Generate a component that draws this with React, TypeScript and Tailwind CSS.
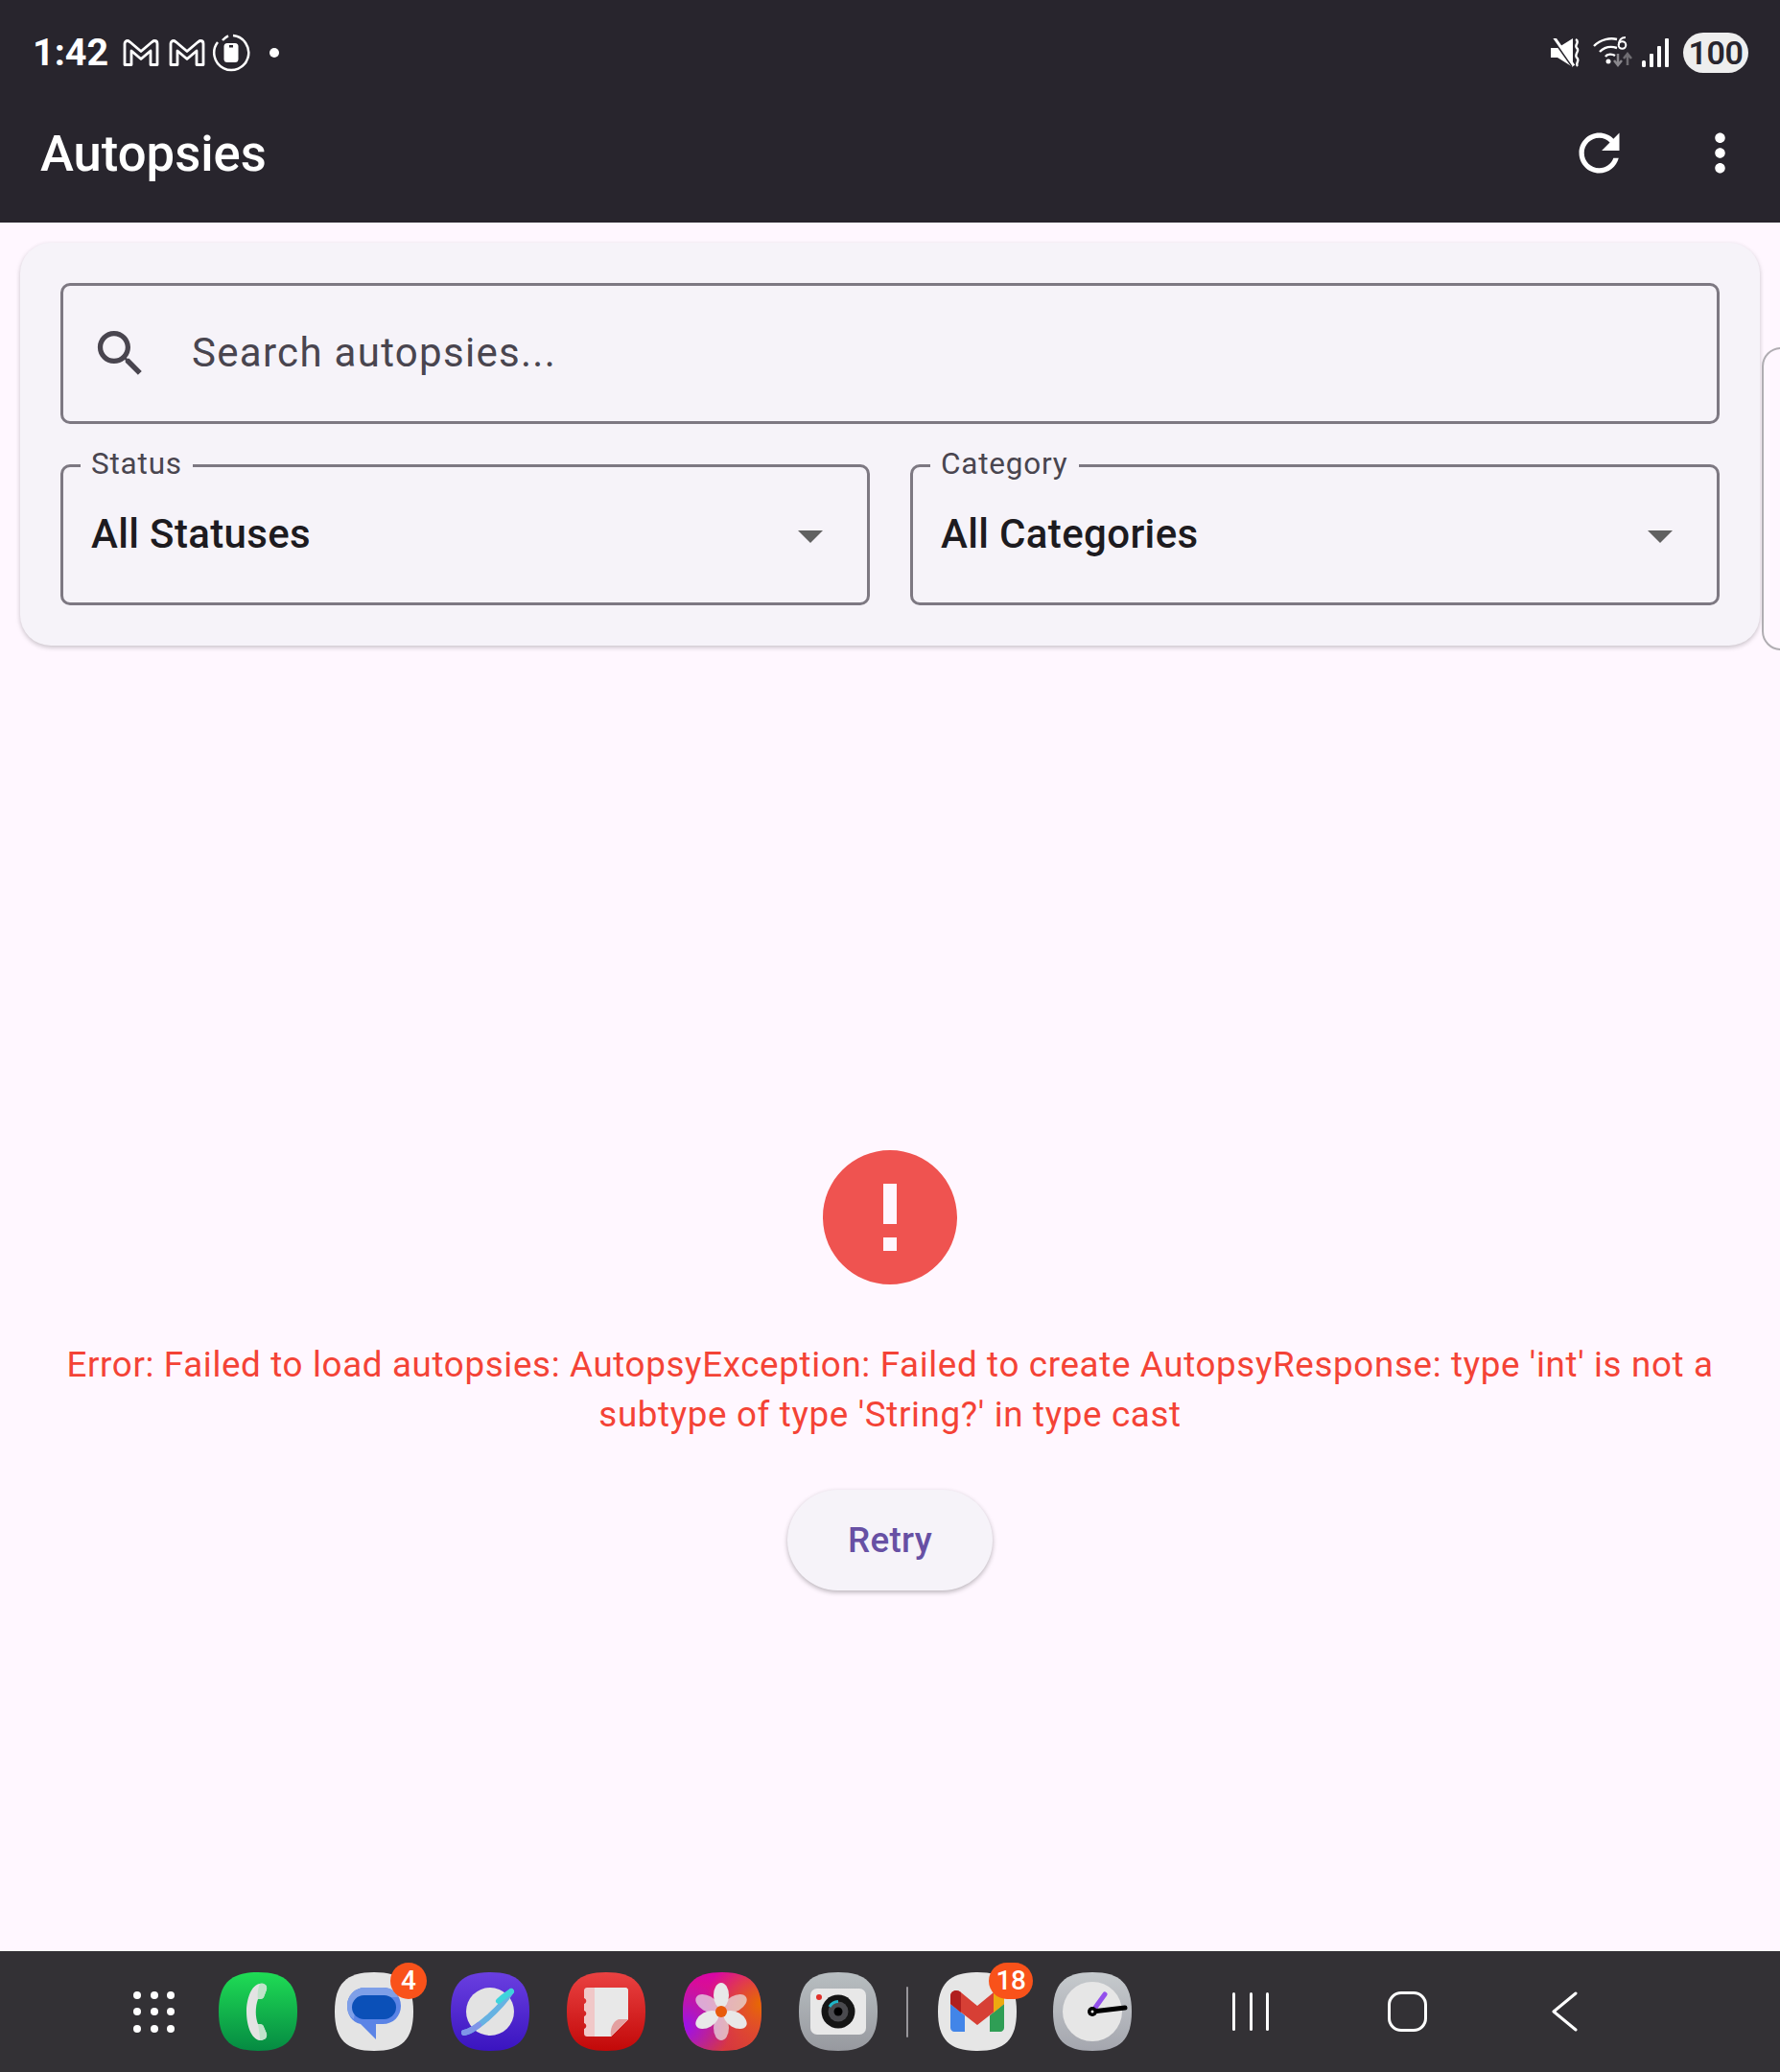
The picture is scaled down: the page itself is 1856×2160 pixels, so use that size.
const iconShape = 'M41 0C70 0 82 12 82 41S70 82 41 82 0 70 0 41 12 0 41 0Z';

function AppIcon({ id, from, to, children }: { id: string; from: string; to: string; children?: React.ReactNode }) {
  return (
    <svg width="82" height="82" viewBox="0 0 82 82" className="block">
      <defs>
        <linearGradient id={id} x1="0" y1="0" x2="0" y2="1">
          <stop offset="0" stopColor={from} />
          <stop offset="1" stopColor={to} />
        </linearGradient>
      </defs>
      <path d={iconShape} fill={`url(#${id})`} />
      {children}
    </svg>
  );
}

function Badge({ text, className }: { text: string; className: string }) {
  return (
    <span className={`absolute top-[-10px] flex h-[38px] items-center justify-center rounded-full bg-[#f9521a] text-[28px] font-medium text-white ${className}`}>
      {text}
    </span>
  );
}

function GmailGlyph() {
  return (
    <svg width="38" height="28" viewBox="0 0 38 28" className="block">
      <path d="M2 26.5V4.5C2 2.5 3.5 1.5 5 1.5C6 1.5 6.5 2 7.5 2.800L19 12.5L30.500 2.800C31.500 2 32 1.500 33 1.500C34.500 1.500 36 2.500 36 4.500V26.500H29V12L19 20.500L9 12V26.500Z" fill="none" stroke="#fff" strokeWidth="2.800" strokeLinejoin="round" />
    </svg>
  );
}

function StatusBar() {
  return (
    <div className="flex h-[110px] items-center justify-between pl-[34px] pr-[33px]">
      <div className="flex items-center">
        <span className="w-[94px] text-[39.5px] font-bold leading-none text-white">1:42</span>
        <GmailGlyph />
        <span className="ml-[10px]"><GmailGlyph /></span>
        <svg width="40" height="40" viewBox="0 0 40 40" className="ml-[7px] block">
          <path d="M22 2.100A18 18 0 1 1 6 9" fill="none" stroke="#fff" strokeWidth="2.500" />
          <path d="M11 7A18 18 0 0 1 17 2.300" fill="none" stroke="#fff" strokeWidth="2.500" />
          <rect x="12.500" y="10" width="15" height="20" rx="3.500" fill="#fff" />
          <rect x="18" y="12" width="4" height="2.500" fill="#28252d" />
        </svg>
        <span className="ml-[20px] block h-[10px] w-[10px] rounded-full bg-white" />
      </div>
      <div className="flex items-center">
        <svg width="30" height="30" viewBox="0 0 30 30" className="block">
          <path d="M0 10H7L23 0V30L7 20H0Z" fill="#fff" />
          <path d="M1 -2L23 29" stroke="#28252d" strokeWidth="3.500" />
          <path d="M3.500 -1L24 28.500" stroke="#fff" strokeWidth="3" />
          <path d="M26 1C31 4 24 7 27 10C31 13 24 16 27 20C31 23 25 26 28 29" fill="none" stroke="#fff" strokeWidth="2.400" />
        </svg>
        <svg width="42" height="34" viewBox="0 0 42 34" className="ml-[14px] block">
          <path d="M1 10C8 3 18 1 25 3" fill="none" stroke="#fff" strokeWidth="2.400" />
          <path d="M7 16C12 11 19 10 25 12" fill="none" stroke="#fff" strokeWidth="2.400" />
          <path d="M13 21C15 18 20 18 23 20" fill="none" stroke="#fff" strokeWidth="2.400" />
          <circle cx="16" cy="26" r="2.500" fill="#fff" />
          <circle cx="30.500" cy="9" r="3.800" fill="none" stroke="#fff" strokeWidth="2" />
          <path d="M34 1C29 1 27 4 26.800 9" fill="none" stroke="#fff" strokeWidth="2" />
          <path d="M26 18V29M22 25L26 30L30 25" fill="none" stroke="#8a888d" strokeWidth="2.500" />
          <path d="M36 30V19M32 23L36 18L40 23" fill="none" stroke="#6f6d72" strokeWidth="2.500" />
        </svg>
        <svg width="28" height="30" viewBox="0 0 28 30" className="ml-[9px] block">
          <rect x="0" y="23" width="4" height="7" rx="1.500" fill="#fff" />
          <rect x="8" y="16" width="4" height="14" rx="1" fill="#fff" />
          <rect x="16" y="8" width="4" height="22" rx="1" fill="#fff" />
          <rect x="24" y="0" width="4" height="30" rx="1" fill="#fff" />
        </svg>
        <span className="ml-[15px] flex h-[42px] w-[68px] items-center justify-center rounded-full bg-[#eeeeee] text-[34px] font-semibold leading-none tracking-[-0.5px] text-[#28252d]">100</span>
      </div>
    </div>
  );
}

function AppBar() {
  return (
    <div className="flex h-[122px] items-center justify-between pb-[24px] pl-[42px] pr-[31px]">
      <h1 className="translate-y-[1px] text-[52.600px] font-medium leading-none text-white">Autopsies</h1>
      <div className="flex items-center gap-[63px]">
        <svg width="63" height="63" viewBox="0 0 24 24" fill="#fff" className="block">
          <path d="M17.65 6.35C16.2 4.9 14.21 4 12 4c-4.42 0-7.99 3.58-7.99 8s3.57 8 7.99 8c3.73 0 6.84-2.55 7.73-6h-2.08c-.82 2.33-3.04 4-5.65 4-3.31 0-6-2.69-6-6s2.69-6 6-6c1.66 0 3.14.69 4.22 1.78L13 11h7V4l-2.35 2.35z" />
        </svg>
        <svg width="63" height="63" viewBox="0 0 24 24" fill="#fff" className="block">
          <path d="M12 8c1.1 0 2-.9 2-2s-.9-2-2-2-2 .9-2 2 .9 2 2 2zm0 2c-1.1 0-2 .9-2 2s.9 2 2 2 2-.9 2-2-.9-2-2-2zm0 6c-1.1 0-2 .9-2 2s.9 2 2 2 2-.9 2-2-.9-2-2-2z" />
        </svg>
      </div>
    </div>
  );
}

function Dropdown({ label, value }: { label: string; value: string }) {
  return (
    <div className="relative flex h-[147px] flex-1 items-center justify-between rounded-[10px] border-[3px] border-[#7d7882] pb-[2px] pl-[29px] pr-[46px]">
      <span className="absolute left-[18px] top-[-21px] bg-[#f6f3f9] px-[11px] text-[31.5px] leading-[36px] tracking-[0.8px] text-[#49454f]">{label}</span>
      <span className="text-[42px] font-medium leading-none tracking-[0.35px] text-[#1d1b20]">{value}</span>
      <span className="mt-[5px] block h-0 w-0 border-x-[13px] border-t-[13px] border-x-transparent border-t-[#616161]" />
    </div>
  );
}

function FilterCard() {
  return (
    <div className="mx-[21px] mt-[21px] flex flex-col gap-[42px] rounded-[32px] bg-[#f6f3f9] p-[42px] shadow-[0_2px_5px_rgba(0,0,0,0.22)]">
      <div className="flex h-[147px] items-center rounded-[10px] border-[3px] border-[#7d7882] pl-[28px]">
        <svg width="63" height="63" viewBox="0 0 24 24" fill="#49454f" className="block">
          <path d="M15.5 14h-.79l-.28-.27C15.41 12.59 16 11.11 16 9.5 16 5.91 13.09 3 9.5 3S3 5.91 3 9.5 5.91 16 9.5 16c1.61 0 3.09-.59 4.23-1.57l.27.28v.79l5 4.99L20.49 19l-4.99-5zm-6 0C7.01 14 5 11.99 5 9.5S7.01 5 9.5 5 14 7.01 14 9.5 11.99 14 9.5 14z" />
        </svg>
        <span className="mb-[2px] ml-[43px] text-[42px] leading-none tracking-[1.300px] text-[#49454f]">Search autopsies...</span>
      </div>
      <div className="flex gap-[42px]">
        <Dropdown label="Status" value="All Statuses" />
        <Dropdown label="Category" value="All Categories" />
      </div>
    </div>
  );
}

function ErrorState() {
  return (
    <div className="flex flex-col items-center pt-[512px]">
      <svg width="168" height="168" viewBox="0 0 24 24" fill="#ef5350" className="block">
        <path d="M12 2C6.48 2 2 6.48 2 12s4.48 10 10 10 10-4.48 10-10S17.52 2 12 2zm1 15h-2v-2h2v2zm0-4h-2V7h2v6z" />
      </svg>
      <p className="mt-[44px] w-full px-[63px] text-center text-[36.75px] leading-[52px] tracking-[0.65px] text-[#f44336]">
        Error: Failed to load autopsies: AutopsyException: Failed to create AutopsyResponse: type 'int' is not a subtype of type 'String?' in type cast
      </p>
      <button className="mt-[52px] flex h-[105px] w-[214px] items-center justify-center rounded-full bg-[#f6f3f9] text-[36.75px] font-medium tracking-[0.3px] text-[#6750a4] shadow-[0_2px_5px_rgba(0,0,0,0.28)]">
        Retry
      </button>
    </div>
  );
}

function Dock() {
  return (
    <div className="flex h-[126px] items-center bg-[#333135] pl-[139px]">
      <div className="grid grid-cols-3 gap-x-[9.500px] gap-y-[9.500px]">
        {Array.from({ length: 9 }).map((_, i) => <span key={i} className="block h-[8px] w-[8px] rounded-full bg-white" />)}
      </div>
      <div className="ml-[46px] flex items-center gap-[39px]">
        <AppIcon id="phone" from="#1fdc55" to="#058a42">
          <path d="M43 12C47 11 51 13 50 18L47 26C46 28 43 28 41 28C38 36 38 47 41 54C44 54 46 54 47 57L50 64C51 69 47 71 43 71C34 70 29 55 29 41C29 28 34 13 43 12Z" fill="#e3e3e3" />
          <path d="M43 12C47 11 51 13 50 18L47 26C46 28 43 28 41 28C40 24 41 16 43 12Z" fill="#bfe3ca" />
          <path d="M41 54C44 54 46 54 47 57L50 64C51 69 47 71 43 71C43 66 42 60 41 54Z" fill="#bfe3ca" />
        </AppIcon>
        <div className="relative">
          <AppIcon id="messages" from="#e4e4e4" to="#e4e4e4">
            <path d="M32 16H50C61 16 69 24 69 35C69 46 61 54 50 54H43V70L27 54C18 52 13 44 13 35C13 24 21 16 32 16Z" fill="#5b84e6" />
            <path d="M32 16H50C58 16 64 19 66 26H20C22 19 25 16 32 16Z" fill="#7e9fe8" />
            <path d="M32 16C21 16 13 24 13 35C13 41 15 46 20 49L22 32Z" fill="#7e9fe8" />
            <rect x="18" y="24" width="46" height="25" rx="12.500" fill="#0b50b8" />
          </AppIcon>
          <Badge text="4" className="right-[-14px] w-[38px]" />
        </div>
        <AppIcon id="browser" from="#6a3fe0" to="#3a14c0">
          <circle cx="41" cy="41" r="25" fill="#e3e3e3" />
          <path d="M14 63C24 62 52 38 63 20" fill="none" stroke="#66b2e2" strokeWidth="6" strokeLinecap="round" />
          <path d="M50 30C55 25 59 23 63 20" fill="none" stroke="#3ed4dc" strokeWidth="6" strokeLinecap="round" />
          <path d="M14 63C18 62 24 59 29 55" fill="none" stroke="#7f95e8" strokeWidth="6" strokeLinecap="round" />
        </AppIcon>
        <AppIcon id="notes" from="#ea4242" to="#c20808">
          <path d="M22 16H60C63 16 64 17 64 20V49L46 67H22C19 67 18 66 18 63V59C21 58 21 54 18 53V46C21 45 21 41 18 40V33C21 32 21 28 18 27V20C18 17 19 16 22 16Z" fill="#f0c8c8" />
          <path d="M29 16H60C63 16 64 17 64 20V49L46 67H29Z" fill="#e8e8e8" />
          <path d="M64 49L46 67C45 60 47 52 54 49Z" fill="#e3a0a0" />
        </AppIcon>
        <AppIcon id="gallery" from="#d905a8" to="#d63a3a">
          <defs>
            <radialGradient id="galleryOrange" cx="1" cy="0.4" r="0.7">
              <stop offset="0" stopColor="#e86a00" />
              <stop offset="1" stopColor="#e86a00" stopOpacity="0" />
            </radialGradient>
            <radialGradient id="galleryPurple" cx="0" cy="0.7" r="0.6">
              <stop offset="0" stopColor="#9a10f0" />
              <stop offset="1" stopColor="#9a10f0" stopOpacity="0" />
            </radialGradient>
          </defs>
          <path d={iconShape} fill="url(#galleryOrange)" />
          <path d={iconShape} fill="url(#galleryPurple)" />
          {[0, 60, 120, 180, 240, 300].map((a, i) => (
            <ellipse key={a} cx="40" cy="24" rx="8" ry="13" fill="#e8e8e8" fillOpacity={i % 2 === 0 ? 1 : 0.7} transform={`rotate(${a} 40 41)`} />
          ))}
          <circle cx="40" cy="41" r="6" fill="#e85a0a" />
        </AppIcon>
        <AppIcon id="camera" from="#b8bec1" to="#97999f">
          <rect x="12" y="17" width="58" height="48" rx="7" fill="#e8e8e8" />
          <circle cx="41" cy="41" r="17.500" fill="#151515" />
          <circle cx="41" cy="41" r="10.500" fill="#4a4a4e" />
          <path d="M41 30.500A10.500 10.500 0 0 0 32 36" fill="none" stroke="#1fb6c8" strokeWidth="3" />
          <circle cx="41" cy="41" r="4.500" fill="#000" />
          <circle cx="21" cy="26" r="3" fill="#e0302a" />
        </AppIcon>
      </div>
      <span className="ml-[30px] block h-[53px] w-[2px] rounded-full bg-[#97959a]" />
      <div className="ml-[31px] flex items-center gap-[38px]">
        <div className="relative">
          <AppIcon id="gmail" from="#e6e6e6" to="#e6e6e6">
            <path d="M13 33L28 45V62H17C15 62 13 60 13 58Z" fill="#4285e8" />
            <path d="M54 45L69 33V58C69 60 67 62 65 62H54Z" fill="#2f9e55" />
            <path d="M13 25C13 19 20 17 24 21L41 35L58 21C62 18 62 22 69 25V33L41 55L13 33Z" fill="#d73f35" />
            <path d="M13 25C13 19 20 17 24 21L24 42L13 33Z" fill="#b01f1f" />
            <path d="M58 21L69 25V33L58 42Z" fill="#eeaa10" />
          </AppIcon>
          <Badge text="18" className="right-[-17px] w-[46px] tracking-[-0.5px]" />
        </div>
        <AppIcon id="clock" from="#c6cacd" to="#a4a6ae">
          <circle cx="41" cy="41" r="31" fill="#e6e6e6" />
          <path d="M41 41L54 23" stroke="#9350ec" strokeWidth="5" strokeLinecap="round" />
          <path d="M41 41L75 37" stroke="#000" strokeWidth="5" strokeLinecap="round" />
          <circle cx="41" cy="41" r="5" fill="#000" />
          <circle cx="41" cy="41" r="1.500" fill="#e6e6e6" />
        </AppIcon>
      </div>
      <div className="ml-[105px] flex h-[40px] gap-[14.500px]">
        <span className="block h-full w-[3px] rounded-full bg-white" />
        <span className="block h-full w-[3px] rounded-full bg-white" />
        <span className="block h-full w-[3px] rounded-full bg-white" />
      </div>
      <span className="ml-[124px] block h-[42px] w-[41px] rounded-[14px] border-[3px] border-white" />
      <svg width="27" height="42" viewBox="0 0 27 42" fill="none" stroke="#fff" strokeWidth="3" strokeLinecap="round" strokeLinejoin="round" className="ml-[130px] block">
        <path d="M25 2L2 21L25 40" />
      </svg>
    </div>
  );
}

export default function App() {
  return (
    <div className="relative flex h-[2160px] w-[1856px] flex-col overflow-hidden bg-[#fff7ff] font-[Roboto,sans-serif]">
      <header className="bg-[#28252d]">
        <StatusBar />
        <AppBar />
      </header>
      <main className="flex-1">
        <FilterCard />
        <ErrorState />
      </main>
      <div className="absolute left-[1837px] top-[362px] h-[316px] w-[60px] rounded-[20px] border-[2px] border-[#b0adb2]" />
      <Dock />
    </div>
  );
}
